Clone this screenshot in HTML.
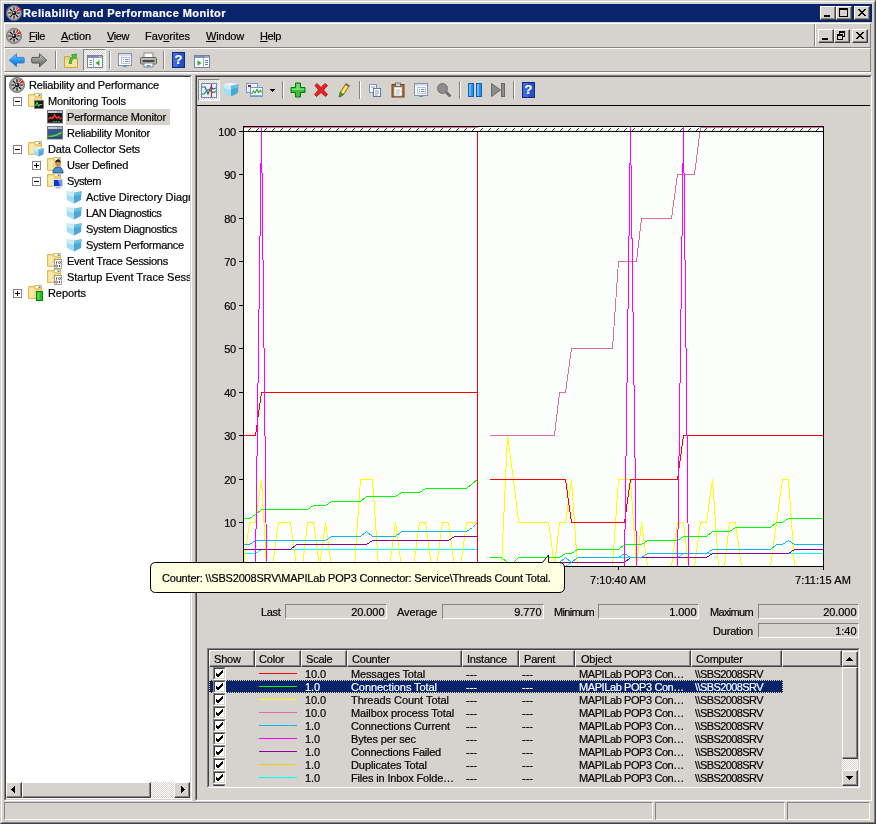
<!DOCTYPE html><html><head><meta charset="utf-8"><title>Reliability and Performance Monitor</title><style>
*{box-sizing:border-box;margin:0;padding:0}
html,body{width:876px;height:824px;overflow:hidden;background:#D6D3CE;}
body{position:relative;font-family:"Liberation Sans",sans-serif;font-size:11px;color:#000;line-height:13px;}
.a{position:absolute}
.t{position:absolute;white-space:nowrap;height:13px;line-height:13px;will-change:transform;-webkit-text-stroke:0.2px}
u{text-decoration:underline;text-underline-offset:1px;text-decoration-thickness:1px}
.btn{position:absolute;background:#D6D3CE;border:1px solid;border-color:#fff #424142 #424142 #fff;box-shadow:inset -1px -1px 0 #848284}
.hdr{position:absolute;top:0;height:17px;background:#D6D3CE;border:1px solid;border-color:#fff #424142 #424142 #fff;box-shadow:inset -1px -1px 0 #848284;}
.dith{background-color:#fff;background-image:conic-gradient(#D6D3CE 25%,#fff 0 50%,#D6D3CE 0 75%,#fff 0);background-size:2px 2px}
.stat{position:absolute;height:14px;border:1px solid;border-color:#848284 #fff #fff #848284;}
.vsep{position:absolute;width:2px;border-left:1px solid #848284;border-right:1px solid #fff}
svg{position:absolute;overflow:visible}
</style></head><body>
<div class="a" style="left:0;top:0;width:876px;height:824px;border:1px solid;border-color:#D6D3CE #424142 #424142 #D6D3CE"></div>
<div class="a" style="left:1px;top:1px;width:874px;height:822px;border:1px solid;border-color:#fff #848284 #848284 #fff"></div>
<div class="a" style="left:4px;top:4px;width:868px;height:18px;background:#08246B"></div>
<svg width="16" height="16" viewBox="0 0 16 16" style="left:6px;top:5px"><circle cx="8" cy="8" r="7.6" fill="#9a9a9a" stroke="#6e6e6e" stroke-width=".8"/><circle cx="8" cy="8" r="6" fill="#c2c2c2"/><path d="M8.800 7.200 L11.300 1.700 L15 5.200 Z" fill="#f01818"/><path d="M8 2.200v3M8 10.800v3M2.200 8h3M10.800 8h3M3.900 3.900l2.100 2.100M10 10l2.100 2.100M3.900 12.100l2.100-2.100" stroke="#101010" stroke-width="1.200"/><path d="M8 8L12.800 3.200" stroke="#fff" stroke-width="1"/><circle cx="8" cy="8" r="2.300" fill="#101010"/><circle cx="7.500" cy="7.400" r=".9" fill="#fff"/></svg>
<div class="t" style="left:23px;top:7px;letter-spacing:0.419px;font-weight:bold;color:#fff;">Reliability and Performance Monitor</div>
<div class="btn" style="left:820px;top:6px;width:16px;height:14px"></div>
<div class="a" style="left:824px;top:15px;width:6px;height:2px;background:#000"></div>
<div class="btn" style="left:836px;top:6px;width:16px;height:14px"></div>
<div class="a" style="left:839px;top:8px;width:9px;height:9px;border:1px solid #000;border-top-width:2px"></div>
<div class="btn" style="left:854px;top:6px;width:16px;height:14px"></div>
<svg width="8" height="7" style="left:858px;top:9px" shape-rendering="crispEdges"><path d="M0 0h2v1h1v1h2v-1h1v-1h2v1h-1v1h-1v1h-1v1h1v1h1v1h1v1h-2v-1h-1v-1h-2v1h-1v1h-2v-1h1v-1h1v-1h1v-1h-1v-1h-1v-1h-1z" fill="#000"/></svg>
<div class="a" style="left:4px;top:23px;width:867px;height:25px;border:1px solid;border-color:#fff #848284 #848284 #fff"></div>
<div class="a" style="left:4px;top:48px;width:867px;height:24px;border:1px solid;border-color:#fff #848284 #848284 #fff"></div>
<svg width="16" height="16" viewBox="0 0 16 16" style="left:6px;top:28px"><circle cx="8" cy="8" r="7.6" fill="#9a9a9a" stroke="#6e6e6e" stroke-width=".8"/><circle cx="8" cy="8" r="6" fill="#c2c2c2"/><path d="M8.800 7.200 L11.300 1.700 L15 5.200 Z" fill="#f01818"/><path d="M8 2.200v3M8 10.800v3M2.200 8h3M10.800 8h3M3.900 3.900l2.100 2.100M10 10l2.100 2.100M3.900 12.100l2.100-2.100" stroke="#101010" stroke-width="1.200"/><path d="M8 8L12.800 3.200" stroke="#fff" stroke-width="1"/><circle cx="8" cy="8" r="2.300" fill="#101010"/><circle cx="7.500" cy="7.400" r=".9" fill="#fff"/></svg>
<div class="t" style="left:29px;top:30px;letter-spacing:-0.430px;"><u>F</u>ile</div>
<div class="t" style="left:61px;top:30px;letter-spacing:-0.099px;"><u>A</u>ction</div>
<div class="t" style="left:107px;top:30px;letter-spacing:-0.410px;"><u>V</u>iew</div>
<div class="t" style="left:145px;top:30px;letter-spacing:-0.028px;">Fav<u>o</u>rites</div>
<div class="t" style="left:206px;top:30px;letter-spacing:-0.188px;"><u>W</u>indow</div>
<div class="t" style="left:260px;top:30px;letter-spacing:-0.406px;"><u>H</u>elp</div>
<div class="vsep" style="left:814px;top:24px;height:23px"></div>
<div class="btn" style="left:818px;top:29px;width:16px;height:14px"></div>
<div class="a" style="left:822px;top:38px;width:6px;height:2px;background:#000"></div>
<div class="btn" style="left:834px;top:29px;width:16px;height:14px"></div>
<div class="a" style="left:839px;top:31px;width:6px;height:6px;border:1px solid #000;border-top-width:2px"></div>
<div class="a" style="left:837px;top:34px;width:6px;height:6px;border:1px solid #000;border-top-width:2px;background:#D6D3CE"></div>
<div class="btn" style="left:852px;top:29px;width:16px;height:14px"></div>
<svg width="8" height="7" style="left:856px;top:32px" shape-rendering="crispEdges"><path d="M0 0h2v1h1v1h2v-1h1v-1h2v1h-1v1h-1v1h-1v1h1v1h1v1h1v1h-2v-1h-1v-1h-2v1h-1v1h-2v-1h1v-1h1v-1h1v-1h-1v-1h-1v-1h-1z" fill="#000"/></svg>
<div class="a" style="left:4px;top:72px;width:867px;height:1px;background:#fff"></div><div class="a" style="left:4px;top:73px;width:867px;height:1px;background:#ECEAE6"></div>
<svg width="17" height="16" viewBox="0 0 17 16" style="left:8px;top:52px"><defs><linearGradient id="gb" x1="0" y1="0" x2="0" y2="1"><stop offset="0" stop-color="#78c8ff"/><stop offset=".5" stop-color="#2c98f0"/><stop offset="1" stop-color="#1068c8"/></linearGradient><linearGradient id="gg" x1="0" y1="0" x2="0" y2="1"><stop offset="0" stop-color="#c8c8c8"/><stop offset=".5" stop-color="#909090"/><stop offset="1" stop-color="#686868"/></linearGradient></defs><path d="M8.500 1.800 L1.300 8.200 L8.500 14.700 V11 H15 Q16.300 11 16.300 9.800 V6.600 Q16.300 5.400 15 5.400 H8.500 Z" fill="url(#gb)" stroke="#2078d0" stroke-width=".8"/></svg>
<svg width="17" height="16" viewBox="0 0 17 16" style="left:31px;top:52px"><path d="M8.500 1.800 L15.700 8.200 L8.500 14.700 V11 H2 Q.700 11 .700 9.800 V6.600 Q.700 5.400 2 5.400 H8.500 Z" fill="url(#gg)" stroke="#484848" stroke-width=".9"/></svg>
<div class="vsep" style="left:55px;top:51px;height:18px"></div>
<svg width="16" height="16" viewBox="0 0 16 16" style="left:63px;top:52px"><path d="M1.500 4.500h5l1 1.500h7v9.500h-13z" fill="#f0d070" stroke="#c8a040" stroke-width=".9"/><path d="M2 7.500h12v7.500h-12z" fill="#f8e498"/><path d="M6.200 11.500 C6.200 7.500 7.500 5.500 9.800 4.800 L8.600 2.800 L13.600 2 L12.800 7 L11.300 5.600 C9.500 6.500 8.600 8.500 8.400 11.500z" fill="#48c848" stroke="#208820" stroke-width=".7"/></svg>
<div class="a dith" style="left:83px;top:49px;width:23px;height:22px;border:1px solid;border-color:#848284 #fff #fff #848284"></div>
<svg width="16" height="16" viewBox="0 0 16 16" style="left:87px;top:53px"><rect x=".5" y="2.500" width="15" height="12" fill="#fff" stroke="#7880a0"/><rect x="1" y="3" width="14" height="2" fill="#8090b0"/><path d="M6.500 5v9.500" stroke="#a0a8c0"/><path d="M2.500 7.500h2.500M2.500 9.500h2.500M2.500 11.500h2.500" stroke="#5080d0" stroke-width="1"/><path d="M12.500 7v6l-4-3z" fill="#38b038"/><path d="M11.500 4h1M13.500 4h1" stroke="#fff"/></svg>
<div class="vsep" style="left:109px;top:51px;height:18px"></div>
<svg width="16" height="16" viewBox="0 0 16 16" style="left:117px;top:52px"><rect x="1.500" y="1.500" width="13" height="12" fill="#fcfcfe" stroke="#8890a8"/><rect x="2" y="2" width="12" height="1.800" fill="#d0d8e8"/><rect x="4.500" y="5.500" width="8" height="6" fill="#fff" stroke="#a8b4cc" stroke-width=".8"/><path d="M6 7.500h1M8 7.500h3.500M6 9.500h1M8 9.500h3.500" stroke="#5088d0" stroke-width=".9"/><rect x="6" y="13.500" width="4" height="1.500" fill="#30a8e8"/></svg>
<svg width="17" height="16" viewBox="0 0 17 16" style="left:140px;top:52px"><rect x="4" y="1" width="9" height="5" fill="#fff" stroke="#888"/><rect x=".5" y="5.5" width="16" height="6.5" rx="1" fill="#b8b8b8" stroke="#606060"/><rect x="2.5" y="8" width="12" height="2" fill="#484848"/><rect x="4" y="11" width="9" height="4" fill="#fff" stroke="#888"/><rect x="6.5" y="13" width="4" height="1.6" fill="#30a0e0"/><circle cx="14.3" cy="7" r=".7" fill="#40e040"/></svg>
<div class="vsep" style="left:163px;top:51px;height:18px"></div>
<svg width="13" height="16" viewBox="0 0 13 16" style="left:172px;top:52px"><rect x=".5" y=".5" width="12" height="15" fill="#2850c8" stroke="#102880"/><rect x="1" y="1" width="5" height="14" fill="#4878e0" opacity=".7"/></svg>
<div class="t" style="left:172px;top:53px;width:13px;text-align:center;color:#fff;font-weight:bold;font-size:13px;line-height:14px;height:14px">?</div>
<svg width="16" height="16" viewBox="0 0 16 16" style="left:194px;top:53px"><rect x=".5" y="2.500" width="15" height="12" fill="#fff" stroke="#7880a0"/><rect x="1" y="3" width="14" height="2" fill="#8090b0"/><path d="M9.500 5v9.500" stroke="#a0a8c0"/><path d="M11 7.500h3M11 9.500h3M11 11.500h3" stroke="#5080d0" stroke-width="1"/><path d="M3.500 7v6l4-3z" fill="#38b038"/><path d="M11.500 4h1M13.500 4h1" stroke="#fff"/></svg>
<div class="a" style="left:4px;top:75px;width:188px;height:726px;background:#fff;border:1px solid;border-color:#848284 #fff #fff #848284"></div>
<div class="a" style="left:5px;top:76px;width:186px;height:724px;border:1px solid;border-color:#424142 #D6D3CE #D6D3CE #424142"></div>
<div class="a" style="left:6px;top:77px;width:184px;height:705px;overflow:hidden">
<svg width="16" height="16" viewBox="0 0 16 16" style="left:3px;top:0px"><circle cx="8" cy="8" r="7.6" fill="#9a9a9a" stroke="#6e6e6e" stroke-width=".8"/><circle cx="8" cy="8" r="6" fill="#c2c2c2"/><path d="M8.800 7.200 L11.300 1.700 L15 5.200 Z" fill="#f01818"/><path d="M8 2.200v3M8 10.800v3M2.200 8h3M10.800 8h3M3.900 3.900l2.100 2.100M10 10l2.100 2.100M3.900 12.100l2.100-2.100" stroke="#101010" stroke-width="1.200"/><path d="M8 8L12.800 3.200" stroke="#fff" stroke-width="1"/><circle cx="8" cy="8" r="2.300" fill="#101010"/><circle cx="7.500" cy="7.400" r=".9" fill="#fff"/></svg>
<div class="t" style="left:23.2px;top:2px;letter-spacing:-0.169px;">Reliability and Performance</div>
<div class="a" style="left:7px;top:20px;width:9px;height:9px;border:1px solid #848284;background:#fff"></div>
<div class="a" style="left:9px;top:24px;width:5px;height:1px;background:#000"></div>
<svg width="16" height="16" viewBox="0 0 16 16" style="left:22px;top:16px"><path d="M6.500 0.500h7v4h-7z" fill="#f8e8a8" stroke="#dcb650" stroke-width=".9"/><rect x="8" y="1.500" width="4.500" height="1.500" fill="#fff"/><rect x="10.500" y="1.500" width="2" height="1.500" fill="#3890e8"/><path d="M0.500 1.500h6l1.500 2.500h5.500v9.500h-13z" fill="#f4da88" stroke="#dcb650" stroke-width=".9"/><path d="M1.500 3h4.500v9.500h-4.500z" fill="#faecb4" opacity=".8"/><rect x="6.500" y="7.500" width="9" height="8" fill="#201418" stroke="#7a8088"/><path d="M7.500 13l1.500-3.500 1.500 3.500 1.500-1.500h2" stroke="#40e040" stroke-width="1.200" fill="none"/></svg>
<div class="t" style="left:42px;top:18px;letter-spacing:-0.120px;">Monitoring Tools</div>
<div class="a" style="left:60px;top:32px;width:104px;height:16px;background:#D6D3CE"></div>
<svg width="16" height="16" viewBox="0 0 16 16" style="left:41px;top:32px"><rect x=".5" y="1.5" width="15" height="12.5" fill="#181818" stroke="#707070"/><rect x="1" y="2" width="14" height="2" fill="#ccd0d8"/><path d="M10 3h1M12 3h1M14 3h.5" stroke="#4060c0"/><path d="M1.5 10 l2-1.5 2 1 2-3.5 2 3 2-1 2 1.5 1-.5" stroke="#f03030" stroke-width="1.6" fill="none"/><path d="M6 12.500h1.500M8.500 12.500h1.500M11 12.500h1.500" stroke="#50a070" stroke-width="1"/></svg>
<div class="t" style="left:61px;top:34px;letter-spacing:-0.197px;">Performance Monitor</div>
<svg width="16" height="16" viewBox="0 0 16 16" style="left:41px;top:48px"><rect x=".5" y="1.5" width="15" height="12.5" fill="#385888" stroke="#707880"/><rect x="1" y="2" width="14" height="2" fill="#c4ccdc"/><path d="M10 3h1M12 3h1M14 3h.5" stroke="#4060c0"/><path d="M1.5 11.5 c4 0 8-1 13-4" stroke="#50e040" stroke-width="1.6" fill="none"/><path d="M1.5 12.8h13" stroke="#203860" stroke-width="1"/></svg>
<div class="t" style="left:61px;top:50px;letter-spacing:-0.201px;">Reliability Monitor</div>
<div class="a" style="left:7px;top:68px;width:9px;height:9px;border:1px solid #848284;background:#fff"></div>
<div class="a" style="left:9px;top:72px;width:5px;height:1px;background:#000"></div>
<svg width="16" height="16" viewBox="0 0 16 16" style="left:22px;top:64px"><path d="M6.500 0.500h7v4h-7z" fill="#f8e8a8" stroke="#dcb650" stroke-width=".9"/><rect x="8" y="1.500" width="4.500" height="1.500" fill="#fff"/><rect x="10.500" y="1.500" width="2" height="1.500" fill="#3890e8"/><path d="M0.500 1.500h6l1.500 2.500h5.500v9.500h-13z" fill="#f4da88" stroke="#dcb650" stroke-width=".9"/><path d="M1.500 3h4.500v9.500h-4.500z" fill="#faecb4" opacity=".8"/><g transform="translate(5,5.500) scale(.7)"><path d="M0.500 2 L8 3.500 L8 14.500 L1 11z" fill="#a4dcf2"/><path d="M0.500 2 L8 3.500 L8 8 L.8 6z" fill="#ccecfa"/><path d="M8 3.500 L15.500 2 L15 11 L8 14.500z" fill="#4aa8d4"/><path d="M8 3.500 L15.500 2 L15.300 5.500 L8 7z" fill="#6cc0e4"/><path d="M0.500 2 L8 1 L15.500 2 L8 3.500z" fill="#f0fbff"/></g></svg>
<div class="t" style="left:42px;top:66px;letter-spacing:-0.148px;">Data Collector Sets</div>
<div class="a" style="left:26px;top:84px;width:9px;height:9px;border:1px solid #848284;background:#fff"></div>
<div class="a" style="left:28px;top:88px;width:5px;height:1px;background:#000"></div>
<div class="a" style="left:30px;top:86px;width:1px;height:5px;background:#000"></div>
<svg width="16" height="16" viewBox="0 0 16 16" style="left:41px;top:80px"><path d="M6.500 0.500h7v4h-7z" fill="#f8e8a8" stroke="#dcb650" stroke-width=".9"/><rect x="8" y="1.500" width="4.500" height="1.500" fill="#fff"/><rect x="10.500" y="1.500" width="2" height="1.500" fill="#3890e8"/><path d="M0.500 1.500h6l1.500 2.500h5.500v9.500h-13z" fill="#f4da88" stroke="#dcb650" stroke-width=".9"/><path d="M1.500 3h4.500v9.500h-4.500z" fill="#faecb4" opacity=".8"/><path d="M6 16c0-4 2-6 5-6s5 2 5 6z" fill="#4c8cdc" stroke="#183870" stroke-width=".8"/><circle cx="11" cy="6.500" r="2.700" fill="#c89464"/><path d="M8.300 6c0-2.500 1.200-3.500 2.700-3.500s2.700 1 2.700 3.500c-1-1.500-4.400-1.500-5.400 0z" fill="#38241c"/></svg>
<div class="t" style="left:61px;top:82px;letter-spacing:-0.268px;">User Defined</div>
<div class="a" style="left:26px;top:100px;width:9px;height:9px;border:1px solid #848284;background:#fff"></div>
<div class="a" style="left:28px;top:104px;width:5px;height:1px;background:#000"></div>
<svg width="16" height="16" viewBox="0 0 16 16" style="left:41px;top:96px"><path d="M6.500 0.500h7v4h-7z" fill="#f8e8a8" stroke="#dcb650" stroke-width=".9"/><rect x="8" y="1.500" width="4.500" height="1.500" fill="#fff"/><rect x="10.500" y="1.500" width="2" height="1.500" fill="#3890e8"/><path d="M0.500 1.500h6l1.500 2.500h5.500v9.500h-13z" fill="#f4da88" stroke="#dcb650" stroke-width=".9"/><path d="M1.500 3h4.500v9.500h-4.500z" fill="#faecb4" opacity=".8"/><rect x="6.500" y="6.500" width="9" height="7" fill="#1834c4" stroke="#d0d8e8" stroke-width="1"/><path d="M11 7h4v6h-2z" fill="#6c98ec"/><rect x="8.500" y="14" width="5" height="1.500" fill="#b0b8c8"/></svg>
<div class="t" style="left:61px;top:98px;letter-spacing:-0.448px;">System</div>
<svg width="16" height="16" viewBox="0 0 16 16" style="left:60px;top:112px"><path d="M0.500 2 L8 3.500 L8 14.500 L1 11z" fill="#a4dcf2"/><path d="M0.500 2 L8 3.500 L8 8 L.8 6z" fill="#ccecfa"/><path d="M8 3.500 L15.500 2 L15 11 L8 14.500z" fill="#4aa8d4"/><path d="M8 3.500 L15.500 2 L15.300 5.500 L8 7z" fill="#6cc0e4"/><path d="M0.500 2 L8 1 L15.500 2 L8 3.500z" fill="#f0fbff"/></svg>
<div class="t" style="left:80.2px;top:114px;letter-spacing:-0.03px;">Active Directory Diagnostics</div>
<svg width="16" height="16" viewBox="0 0 16 16" style="left:60px;top:128px"><path d="M0.500 2 L8 3.500 L8 14.500 L1 11z" fill="#a4dcf2"/><path d="M0.500 2 L8 3.500 L8 8 L.8 6z" fill="#ccecfa"/><path d="M8 3.500 L15.500 2 L15 11 L8 14.500z" fill="#4aa8d4"/><path d="M8 3.500 L15.500 2 L15.300 5.500 L8 7z" fill="#6cc0e4"/><path d="M0.500 2 L8 1 L15.500 2 L8 3.500z" fill="#f0fbff"/></svg>
<div class="t" style="left:80.2px;top:130px;letter-spacing:-0.390px;">LAN Diagnostics</div>
<svg width="16" height="16" viewBox="0 0 16 16" style="left:60px;top:144px"><path d="M0.500 2 L8 3.500 L8 14.500 L1 11z" fill="#a4dcf2"/><path d="M0.500 2 L8 3.500 L8 8 L.8 6z" fill="#ccecfa"/><path d="M8 3.500 L15.500 2 L15 11 L8 14.500z" fill="#4aa8d4"/><path d="M8 3.500 L15.500 2 L15.300 5.500 L8 7z" fill="#6cc0e4"/><path d="M0.500 2 L8 1 L15.500 2 L8 3.500z" fill="#f0fbff"/></svg>
<div class="t" style="left:80.2px;top:146px;letter-spacing:-0.312px;">System Diagnostics</div>
<svg width="16" height="16" viewBox="0 0 16 16" style="left:60px;top:160px"><path d="M0.500 2 L8 3.500 L8 14.500 L1 11z" fill="#a4dcf2"/><path d="M0.500 2 L8 3.500 L8 8 L.8 6z" fill="#ccecfa"/><path d="M8 3.500 L15.500 2 L15 11 L8 14.500z" fill="#4aa8d4"/><path d="M8 3.500 L15.500 2 L15.300 5.500 L8 7z" fill="#6cc0e4"/><path d="M0.500 2 L8 1 L15.500 2 L8 3.500z" fill="#f0fbff"/></svg>
<div class="t" style="left:80.2px;top:162px;letter-spacing:-0.264px;">System Performance</div>
<svg width="16" height="16" viewBox="0 0 16 16" style="left:41px;top:176px"><path d="M6.500 0.500h7v4h-7z" fill="#f8e8a8" stroke="#dcb650" stroke-width=".9"/><rect x="8" y="1.500" width="4.500" height="1.500" fill="#fff"/><rect x="10.500" y="1.500" width="2" height="1.500" fill="#3890e8"/><path d="M0.500 1.500h6l1.500 2.500h5.500v9.500h-13z" fill="#f4da88" stroke="#dcb650" stroke-width=".9"/><path d="M1.500 3h4.500v9.500h-4.500z" fill="#faecb4" opacity=".8"/><rect x="7.5" y="6.5" width="7" height="9" fill="#f8f8f8" stroke="#909090" stroke-width=".8"/><path d="M9.5 8.5v2M12.5 12v2" stroke="#404040" stroke-width="1"/><circle cx="12.5" cy="9.5" r="1" fill="none" stroke="#404040" stroke-width=".8"/><circle cx="9.5" cy="13" r="1" fill="none" stroke="#404040" stroke-width=".8"/></svg>
<div class="t" style="left:61px;top:178px;letter-spacing:-0.273px;">Event Trace Sessions</div>
<svg width="16" height="16" viewBox="0 0 16 16" style="left:41px;top:192px"><path d="M6.500 0.500h7v4h-7z" fill="#f8e8a8" stroke="#dcb650" stroke-width=".9"/><rect x="8" y="1.500" width="4.500" height="1.500" fill="#fff"/><rect x="10.500" y="1.500" width="2" height="1.500" fill="#3890e8"/><path d="M0.500 1.500h6l1.500 2.500h5.500v9.500h-13z" fill="#f4da88" stroke="#dcb650" stroke-width=".9"/><path d="M1.500 3h4.500v9.500h-4.500z" fill="#faecb4" opacity=".8"/><rect x="7.5" y="6.5" width="7" height="9" fill="#f8f8f8" stroke="#909090" stroke-width=".8"/><path d="M9.5 8.5v2M12.5 12v2" stroke="#404040" stroke-width="1"/><circle cx="12.5" cy="9.5" r="1" fill="none" stroke="#404040" stroke-width=".8"/><circle cx="9.5" cy="13" r="1" fill="none" stroke="#404040" stroke-width=".8"/></svg>
<div class="t" style="left:61px;top:194px;letter-spacing:-0.01px;">Startup Event Trace Sessions</div>
<div class="a" style="left:7px;top:212px;width:9px;height:9px;border:1px solid #848284;background:#fff"></div>
<div class="a" style="left:9px;top:216px;width:5px;height:1px;background:#000"></div>
<div class="a" style="left:11px;top:214px;width:1px;height:5px;background:#000"></div>
<svg width="16" height="16" viewBox="0 0 16 16" style="left:22px;top:208px"><path d="M6.500 0.500h7v4h-7z" fill="#f8e8a8" stroke="#dcb650" stroke-width=".9"/><rect x="8" y="1.500" width="4.500" height="1.500" fill="#fff"/><rect x="10.500" y="1.500" width="2" height="1.500" fill="#3890e8"/><path d="M0.500 1.500h6l1.500 2.500h5.500v9.500h-13z" fill="#f4da88" stroke="#dcb650" stroke-width=".9"/><path d="M1.500 3h4.500v9.500h-4.500z" fill="#faecb4" opacity=".8"/><rect x="8.500" y="6.500" width="6" height="9" fill="#20c020" stroke="#108010"/><rect x="9.500" y="7.500" width="2" height="7" fill="#70f070" opacity=".7"/></svg>
<div class="t" style="left:42px;top:210px;letter-spacing:-0.076px;">Reports</div>
</div>
<div class="a dith" style="left:6px;top:782px;width:184px;height:16px"></div>
<div class="btn" style="left:6px;top:782px;width:16px;height:16px"></div>
<div class="btn" style="left:174px;top:782px;width:16px;height:16px"></div>
<div class="btn" style="left:22px;top:782px;width:129px;height:16px"></div>
<svg width="4" height="7" style="left:11px;top:786px" shape-rendering="crispEdges"><path d="M4 0v7L0 3.500z" fill="#000"/></svg>
<svg width="4" height="7" style="left:181px;top:786px" shape-rendering="crispEdges"><path d="M0 0v7L4 3.500z" fill="#000"/></svg>
<div class="a" style="left:195px;top:75px;width:677px;height:726px;border:1px solid;border-color:#848284 #fff #fff #848284"></div>
<div class="a" style="left:196px;top:76px;width:675px;height:724px;border:1px solid;border-color:#424142 #D6D3CE #D6D3CE #424142"></div>
<div class="a" style="left:197px;top:105px;width:673px;height:1px;background:#000"></div>
<div class="a dith" style="left:198px;top:79px;width:22px;height:22px;border:1px solid;border-color:#848284 #fff #fff #848284"></div>
<svg width="16" height="16" viewBox="0 0 16 16" style="left:201px;top:83px"><rect x=".5" y=".5" width="15" height="14" fill="#e8f0fc" stroke="#6888c8"/><path d="M1 4l3 0 3 7 3-7 2 2 3-1" stroke="#2858c8" stroke-width="1.2" fill="none"/><path d="M1 11c2 1 3-1 4.500-3s3-2 4.500 0 3 2 5 0" stroke="#30a030" stroke-width="1.300" fill="none"/><path d="M10.500 1v13" stroke="#e02020" stroke-width="1.200"/></svg>
<svg width="16" height="16" viewBox="0 0 16 16" style="left:223px;top:82px"><path d="M0.500 2 L8 3.500 L8 14.500 L1 11z" fill="#a4dcf2"/><path d="M0.500 2 L8 3.500 L8 8 L.8 6z" fill="#ccecfa"/><path d="M8 3.500 L15.500 2 L15 11 L8 14.500z" fill="#4aa8d4"/><path d="M8 3.500 L15.500 2 L15.300 5.500 L8 7z" fill="#6cc0e4"/><path d="M0.500 2 L8 1 L15.500 2 L8 3.500z" fill="#f0fbff"/></svg>
<svg width="17" height="16" viewBox="0 0 17 16" style="left:246px;top:82px"><rect x=".5" y="1.500" width="11" height="9" fill="#e8f0fc" stroke="#7898d0"/><rect x="2" y="3" width="3" height="2" fill="#b01030"/><rect x="4.500" y="5.500" width="12" height="9" fill="#f4f8ff" stroke="#7898d0"/><path d="M5.500 12l2-3 1.500 2 2-3.500 1.500 3 2-2 1 2" stroke="#30a030" stroke-width="1.100" fill="none"/><path d="M5.500 13.500h10" stroke="#90a8d0"/></svg>
<svg width="5" height="3" style="left:270px;top:89px" shape-rendering="crispEdges"><path d="M0 0h5L2.500 3z" fill="#000"/></svg>
<div class="vsep" style="left:282px;top:81px;height:18px"></div>
<svg width="16" height="16" viewBox="0 0 16 16" style="left:290px;top:82px"><path d="M5.500 1h5v4.500H15v5h-4.500V15h-5v-4.500H1v-5h4.500z" fill="#38c038" stroke="#107010" stroke-width="1"/><path d="M6.500 2h3v4.500H14v1.500H2V6.500h4.500z" fill="#90f090" opacity=".7"/></svg>
<svg width="16" height="16" viewBox="0 0 16 16" style="left:313px;top:82px"><path d="M2 3.500 L4 1.500 L8 5.500 L12 1.500 L14.500 3.500 L10.500 8 L14.500 12.500 L12.500 14.500 L8 10.500 L3.500 14.500 L1.500 12.500 L5.500 8z" fill="#e82020" stroke="#a01010" stroke-width=".8"/></svg>
<svg width="16" height="16" viewBox="0 0 16 16" style="left:336px;top:82px"><path d="M10 1.500l3.500 2-6 9-3.500-2z" fill="#e8c020" stroke="#806010" stroke-width=".8"/><path d="M11 2l1.500 1-5.500 8.500-1.500-1z" fill="#fff080"/><path d="M4 10.500l3.500 2-1.500 1.500-3 1z" fill="#40a040" stroke="#206020" stroke-width=".6"/><path d="M10 1.500l3.500 2-1 1.500-3.500-2z" fill="#707070"/></svg>
<div class="vsep" style="left:359px;top:81px;height:18px"></div>
<svg width="16" height="16" viewBox="0 0 16 16" style="left:367px;top:82px"><rect x="2.500" y="2.500" width="7" height="8" fill="#fff" stroke="#8090b0"/><rect x="6.500" y="6.500" width="7" height="8" fill="#fff" stroke="#6078a8"/><path d="M8 9h4M8 11h4M8 13h3" stroke="#7090d0" stroke-width=".9"/><path d="M4 5h4" stroke="#7090d0" stroke-width=".9"/></svg>
<svg width="16" height="16" viewBox="0 0 16 16" style="left:390px;top:82px"><rect x="2" y="2.500" width="12" height="12.500" fill="#b07030" stroke="#704010"/><rect x="4" y="5" width="8" height="9" fill="#fff" stroke="#909090" stroke-width=".6"/><rect x="5.500" y="1" width="5" height="3.500" fill="#d0d0d0" stroke="#606060" stroke-width=".8"/><path d="M5.500 8h5M5.500 10h5M5.500 12h4" stroke="#a0a0a0" stroke-width=".8"/></svg>
<svg width="16" height="16" viewBox="0 0 16 16" style="left:413px;top:82px"><rect x="1.500" y="1.500" width="13" height="12" fill="#fcfcfe" stroke="#8890a8"/><rect x="2" y="2" width="12" height="1.800" fill="#d0d8e8"/><rect x="4.500" y="5.500" width="8" height="6" fill="#fff" stroke="#a8b4cc" stroke-width=".8"/><path d="M6 7.500h1M8 7.500h3.500M6 9.500h1M8 9.500h3.500" stroke="#5088d0" stroke-width=".9"/><rect x="6" y="13.500" width="4" height="1.500" fill="#30a8e8"/></svg>
<svg width="16" height="16" viewBox="0 0 16 16" style="left:436px;top:82px"><circle cx="6.500" cy="6.500" r="5" fill="#8c8c8c" stroke="#707070"/><path d="M10 10l4.500 4.500" stroke="#707070" stroke-width="3"/></svg>
<div class="vsep" style="left:459px;top:81px;height:18px"></div>
<svg width="16" height="16" viewBox="0 0 16 16" style="left:467px;top:82px"><rect x="1.500" y="1.500" width="5" height="13" fill="#2890e8" stroke="#1060b0"/><rect x="9.500" y="1.500" width="5" height="13" fill="#2890e8" stroke="#1060b0"/><path d="M3 2v12M11 2v12" stroke="#80c8ff" stroke-width="1.500"/></svg>
<svg width="16" height="16" viewBox="0 0 16 16" style="left:490px;top:82px"><path d="M1.500 1.500L10.500 8 1.500 14.500z" fill="#8c8c8c" stroke="#686868"/><rect x="11.500" y="1.500" width="3" height="13" fill="#8c8c8c" stroke="#686868"/></svg>
<div class="vsep" style="left:513px;top:81px;height:18px"></div>
<svg width="13" height="16" viewBox="0 0 13 16" style="left:522px;top:82px"><rect x=".5" y=".5" width="12" height="15" fill="#2850c8" stroke="#102880"/><rect x="1" y="1" width="5" height="14" fill="#4878e0" opacity=".7"/></svg>
<div class="t" style="left:522px;top:83px;width:13px;text-align:center;color:#fff;font-weight:bold;font-size:13px;line-height:14px;height:14px">?</div>
<div class="a" style="left:243px;top:127px;width:581px;height:440px;background:#FCFEFB"></div>
<svg width="876" height="824" viewBox="0 0 876 824" style="left:0;top:0" shape-rendering="crispEdges" fill="none" stroke-width="1"><defs><pattern id="hatch" width="8" height="3" patternUnits="userSpaceOnUse" x="240" y="128"><rect x="0" y="2" width="1" height="1" fill="#383838"/><rect x="1" y="1" width="1" height="1" fill="#383838"/><rect x="2" y="0" width="1" height="1" fill="#383838"/></pattern><clipPath id="plot"><rect x="243" y="127" width="581" height="440"/></clipPath></defs><rect x="244" y="128" width="580" height="3" fill="url(#hatch)" stroke="none"/><g clip-path="url(#plot)"><polyline points="243.5,553.5 249.5,553.5 255.5,553.5 261.5,549.5 266.5,549.5 272.5,549.5 278.5,549.5 284.5,549.5 290.5,549.5 296.5,549.5 302.5,549.5 307.5,549.5 313.5,549.5 319.5,549.5 325.5,549.5 331.5,549.5 337.5,549.5 343.5,549.5 348.5,549.5 354.5,549.5 360.5,549.5 366.5,549.5 372.5,549.5 378.5,549.5 384.5,549.5 389.5,549.5 395.5,549.5 401.5,549.5 407.5,549.5 413.5,549.5 419.5,549.5 425.5,549.5 431.5,549.5 436.5,549.5 442.5,549.5 448.5,549.5 454.5,549.5 460.5,549.5 466.5,549.5 472.5,549.5 477.5,549.5" stroke="#00FFFF" /><polyline points="489.5,566.5 495.5,566.5 501.5,566.5 507.5,566.5 513.5,566.5 518.5,566.5 524.5,566.5 530.5,566.5 536.5,566.5 542.5,566.5 548.5,566.5 554.5,566.5 559.5,566.5 565.5,566.5 571.5,562.5 577.5,557.5 583.5,557.5 589.5,557.5 595.5,557.5 600.5,557.5 606.5,557.5 612.5,557.5 618.5,557.5 624.5,557.5 630.5,557.5 636.5,557.5 641.5,557.5 647.5,557.5 653.5,557.5 659.5,557.5 665.5,557.5 671.5,557.5 677.5,557.5 683.5,553.5 688.5,553.5 694.5,553.5 700.5,553.5 706.5,553.5 712.5,553.5 718.5,553.5 724.5,553.5 729.5,553.5 735.5,553.5 741.5,553.5 747.5,553.5 753.5,553.5 759.5,553.5 765.5,553.5 770.5,553.5 776.5,553.5 782.5,553.5 788.5,553.5 794.5,553.5 800.5,553.5 806.5,553.5 811.5,553.5 817.5,553.5 823.5,553.5" stroke="#00FFFF" /><polyline points="243.5,566.5 249.5,522.5 255.5,522.5 261.5,479.5 266.5,566.5 272.5,566.5 278.5,522.5 284.5,522.5 290.5,522.5 296.5,566.5 302.5,566.5 307.5,522.5 313.5,522.5 319.5,566.5 325.5,522.5 331.5,566.5 337.5,566.5 343.5,566.5 348.5,566.5 354.5,566.5 360.5,479.5 366.5,479.5 372.5,479.5 378.5,566.5 384.5,566.5 389.5,566.5 395.5,522.5 401.5,566.5 407.5,566.5 413.5,566.5 419.5,522.5 425.5,522.5 431.5,566.5 436.5,566.5 442.5,522.5 448.5,522.5 454.5,566.5 460.5,566.5 466.5,522.5 472.5,522.5 477.5,522.5" stroke="#FFFF00" /><polyline points="489.5,566.5 495.5,566.5 501.5,566.5 507.5,435.5 513.5,479.5 518.5,522.5 524.5,522.5 530.5,522.5 536.5,522.5 542.5,522.5 548.5,522.5 554.5,566.5 559.5,522.5 565.5,522.5 571.5,479.5 577.5,566.5 583.5,566.5 589.5,566.5 595.5,566.5 600.5,566.5 606.5,566.5 612.5,566.5 618.5,479.5 624.5,479.5 630.5,479.5 636.5,566.5 641.5,522.5 647.5,566.5 653.5,566.5 659.5,566.5 665.5,566.5 671.5,566.5 677.5,522.5 683.5,522.5 688.5,566.5 694.5,566.5 700.5,522.5 706.5,522.5 712.5,479.5 718.5,566.5 724.5,566.5 729.5,522.5 735.5,522.5 741.5,566.5 747.5,566.5 753.5,566.5 759.5,566.5 765.5,566.5 770.5,566.5 776.5,522.5 782.5,479.5 788.5,479.5 794.5,566.5 800.5,566.5 806.5,566.5 811.5,566.5 817.5,566.5 823.5,566.5" stroke="#FFFF00" /><polyline points="243.5,549.5 249.5,549.5 255.5,549.5 261.5,549.5 266.5,549.5 272.5,549.5 278.5,549.5 284.5,549.5 290.5,549.5 296.5,544.5 302.5,544.5 307.5,544.5 313.5,544.5 319.5,544.5 325.5,544.5 331.5,544.5 337.5,544.5 343.5,544.5 348.5,544.5 354.5,544.5 360.5,544.5 366.5,544.5 372.5,540.5 378.5,540.5 384.5,540.5 389.5,540.5 395.5,540.5 401.5,540.5 407.5,540.5 413.5,540.5 419.5,540.5 425.5,540.5 431.5,540.5 436.5,540.5 442.5,540.5 448.5,540.5 454.5,536.5 460.5,536.5 466.5,536.5 472.5,536.5 477.5,536.5" stroke="#8C0094" /><polyline points="489.5,562.5 495.5,562.5 501.5,562.5 507.5,562.5 513.5,562.5 518.5,562.5 524.5,562.5 530.5,562.5 536.5,562.5 542.5,562.5 548.5,562.5 554.5,562.5 559.5,562.5 565.5,562.5 571.5,562.5 577.5,562.5 583.5,562.5 589.5,562.5 595.5,562.5 600.5,562.5 606.5,562.5 612.5,562.5 618.5,562.5 624.5,562.5 630.5,557.5 636.5,557.5 641.5,557.5 647.5,557.5 653.5,557.5 659.5,557.5 665.5,557.5 671.5,557.5 677.5,557.5 683.5,557.5 688.5,557.5 694.5,557.5 700.5,557.5 706.5,557.5 712.5,553.5 718.5,553.5 724.5,553.5 729.5,553.5 735.5,553.5 741.5,553.5 747.5,553.5 753.5,553.5 759.5,553.5 765.5,553.5 770.5,553.5 776.5,553.5 782.5,553.5 788.5,553.5 794.5,549.5 800.5,549.5 806.5,549.5 811.5,549.5 817.5,549.5 823.5,549.5" stroke="#8C0094" /><polyline points="243.5,544.5 249.5,544.5 255.5,540.5 261.5,540.5 266.5,540.5 272.5,540.5 278.5,540.5 284.5,540.5 290.5,540.5 296.5,540.5 302.5,540.5 307.5,540.5 313.5,540.5 319.5,540.5 325.5,540.5 331.5,536.5 337.5,536.5 343.5,536.5 348.5,536.5 354.5,536.5 360.5,536.5 366.5,531.5 372.5,536.5 378.5,536.5 384.5,536.5 389.5,536.5 395.5,536.5 401.5,531.5 407.5,531.5 413.5,531.5 419.5,531.5 425.5,531.5 431.5,531.5 436.5,531.5 442.5,531.5 448.5,531.5 454.5,531.5 460.5,531.5 466.5,531.5 472.5,527.5 477.5,522.5" stroke="#10B4F8" /><polyline points="489.5,562.5 495.5,562.5 501.5,562.5 507.5,562.5 513.5,562.5 518.5,562.5 524.5,562.5 530.5,562.5 536.5,562.5 542.5,562.5 548.5,562.5 554.5,562.5 559.5,562.5 565.5,557.5 571.5,562.5 577.5,557.5 583.5,557.5 589.5,557.5 595.5,557.5 600.5,557.5 606.5,557.5 612.5,557.5 618.5,557.5 624.5,553.5 630.5,557.5 636.5,557.5 641.5,557.5 647.5,553.5 653.5,553.5 659.5,553.5 665.5,553.5 671.5,553.5 677.5,553.5 683.5,553.5 688.5,553.5 694.5,553.5 700.5,553.5 706.5,553.5 712.5,549.5 718.5,549.5 724.5,549.5 729.5,549.5 735.5,549.5 741.5,549.5 747.5,549.5 753.5,549.5 759.5,549.5 765.5,549.5 770.5,549.5 776.5,544.5 782.5,544.5 788.5,540.5 794.5,544.5 800.5,544.5 806.5,544.5 811.5,544.5 817.5,544.5 823.5,544.5" stroke="#10B4F8" /><polyline points="243.5,518.5 249.5,518.5 255.5,514.5 261.5,509.5 266.5,509.5 272.5,509.5 278.5,509.5 284.5,509.5 290.5,509.5 296.5,509.5 302.5,509.5 307.5,509.5 313.5,505.5 319.5,505.5 325.5,505.5 331.5,501.5 337.5,501.5 343.5,501.5 348.5,501.5 354.5,501.5 360.5,501.5 366.5,496.5 372.5,496.5 378.5,496.5 384.5,496.5 389.5,496.5 395.5,496.5 401.5,492.5 407.5,492.5 413.5,492.5 419.5,492.5 425.5,488.5 431.5,488.5 436.5,488.5 442.5,488.5 448.5,488.5 454.5,488.5 460.5,488.5 466.5,488.5 472.5,483.5 477.5,479.5" stroke="#00FF00" /><polyline points="489.5,557.5 495.5,557.5 501.5,557.5 507.5,562.5 513.5,562.5 518.5,557.5 524.5,557.5 530.5,557.5 536.5,557.5 542.5,557.5 548.5,557.5 554.5,557.5 559.5,557.5 565.5,553.5 571.5,553.5 577.5,549.5 583.5,549.5 589.5,549.5 595.5,549.5 600.5,549.5 606.5,549.5 612.5,549.5 618.5,549.5 624.5,544.5 630.5,544.5 636.5,544.5 641.5,544.5 647.5,540.5 653.5,540.5 659.5,540.5 665.5,540.5 671.5,540.5 677.5,540.5 683.5,536.5 688.5,536.5 694.5,536.5 700.5,536.5 706.5,536.5 712.5,531.5 718.5,531.5 724.5,531.5 729.5,531.5 735.5,527.5 741.5,527.5 747.5,527.5 753.5,527.5 759.5,527.5 765.5,527.5 770.5,527.5 776.5,522.5 782.5,522.5 788.5,518.5 794.5,518.5 800.5,518.5 806.5,518.5 811.5,518.5 817.5,518.5 823.5,518.5" stroke="#00FF00" /><polyline points="243.5,127.5 477.5,127.5" stroke="#E070A8" /><polyline points="489.5,435.5 495.5,435.5 501.5,435.5 507.5,435.5 513.5,435.5 518.5,435.5 524.5,435.5 530.5,435.5 536.5,435.5 542.5,435.5 548.5,435.5 554.5,435.5 559.5,392.5 565.5,392.5 571.5,348.5 577.5,348.5 583.5,348.5 589.5,348.5 595.5,348.5 600.5,348.5 606.5,348.5 612.5,348.5 618.5,261.5 624.5,261.5 630.5,261.5 636.5,261.5 641.5,218.5 647.5,218.5 653.5,218.5 659.5,218.5 665.5,218.5 671.5,218.5 677.5,174.5 683.5,174.5 688.5,174.5 694.5,174.5" stroke="#DC6CA4" /><polyline points="694.5,174.5 700.5,127.5 823.5,127.5" stroke="#DC6CA4" /><polyline points="243.5,435.5 249.5,435.5 255.5,435.5 261.5,392.5 266.5,392.5 272.5,392.5 278.5,392.5 284.5,392.5 290.5,392.5 296.5,392.5 302.5,392.5 307.5,392.5 313.5,392.5 319.5,392.5 325.5,392.5 331.5,392.5 337.5,392.5 343.5,392.5 348.5,392.5 354.5,392.5 360.5,392.5 366.5,392.5 372.5,392.5 378.5,392.5 384.5,392.5 389.5,392.5 395.5,392.5 401.5,392.5 407.5,392.5 413.5,392.5 419.5,392.5 425.5,392.5 431.5,392.5 436.5,392.5 442.5,392.5 448.5,392.5 454.5,392.5 460.5,392.5 466.5,392.5 472.5,392.5 477.5,392.5" stroke="#FF0000" /><polyline points="489.5,479.5 495.5,479.5 501.5,479.5 507.5,479.5 513.5,479.5 518.5,479.5 524.5,479.5 530.5,479.5 536.5,479.5 542.5,479.5 548.5,479.5 554.5,479.5 559.5,479.5 565.5,479.5 571.5,522.5 577.5,522.5 583.5,522.5 589.5,522.5 595.5,522.5 600.5,522.5 606.5,522.5 612.5,522.5 618.5,522.5 624.5,522.5 630.5,479.5 636.5,479.5 641.5,479.5 647.5,479.5 653.5,479.5 659.5,479.5 665.5,479.5 671.5,479.5 677.5,479.5 683.5,435.5 688.5,435.5 694.5,435.5 700.5,435.5 706.5,435.5 712.5,435.5 718.5,435.5 724.5,435.5 729.5,435.5 735.5,435.5 741.5,435.5 747.5,435.5 753.5,435.5 759.5,435.5 765.5,435.5 770.5,435.5 776.5,435.5 782.5,435.5 788.5,435.5 794.5,435.5 800.5,435.5 806.5,435.5 811.5,435.5 817.5,435.5 823.5,435.5" stroke="#FF0000" /><polyline points="243.5,566.5 255.5,566.5" stroke="#FF00FF" /><polyline points="255.5,566.5 261.5,127.5 266.5,566.5" stroke="#FF00FF" /><polyline points="624.5,566.5 630.5,127.5 636.5,566.5" stroke="#FF00FF" /><polyline points="677.5,566.5 683.5,127.5 688.5,566.5" stroke="#FF00FF" /></g><path d="M477.500 131V566" stroke="#FF0000"/><path d="M243.500 126.500H824" stroke="#000"/><path d="M243.500 131.500H824" stroke="#000"/><path d="M243.500 126V567" stroke="#000"/><path d="M823.500 126V567" stroke="#000"/><path d="M243 566.500H824" stroke="#000"/><path d="M239 522.5H243" stroke="#000"/><path d="M239 479.5H243" stroke="#000"/><path d="M239 435.5H243" stroke="#000"/><path d="M239 392.5H243" stroke="#000"/><path d="M239 348.5H243" stroke="#000"/><path d="M239 305.5H243" stroke="#000"/><path d="M239 261.5H243" stroke="#000"/><path d="M239 218.5H243" stroke="#000"/><path d="M239 174.5H243" stroke="#000"/><path d="M239 131.5H243" stroke="#000"/><path d="M618.500 566V570M823.500 566V570" stroke="#000"/></svg>
<div class="t" style="left:200px;width:36px;text-align:right;top:517px;letter-spacing:-0.2px">10</div>
<div class="t" style="left:200px;width:36px;text-align:right;top:474px;letter-spacing:-0.2px">20</div>
<div class="t" style="left:200px;width:36px;text-align:right;top:430px;letter-spacing:-0.2px">30</div>
<div class="t" style="left:200px;width:36px;text-align:right;top:387px;letter-spacing:-0.2px">40</div>
<div class="t" style="left:200px;width:36px;text-align:right;top:343px;letter-spacing:-0.2px">50</div>
<div class="t" style="left:200px;width:36px;text-align:right;top:300px;letter-spacing:-0.2px">60</div>
<div class="t" style="left:200px;width:36px;text-align:right;top:256px;letter-spacing:-0.2px">70</div>
<div class="t" style="left:200px;width:36px;text-align:right;top:213px;letter-spacing:-0.2px">80</div>
<div class="t" style="left:200px;width:36px;text-align:right;top:169px;letter-spacing:-0.2px">90</div>
<div class="t" style="left:200px;width:36px;text-align:right;top:126px;letter-spacing:-0.2px">100</div>
<div class="t" style="left:590px;top:574px;letter-spacing:0.030px;">7:10:40 AM</div>
<div class="t" style="left:795px;top:574px;letter-spacing:0.111px;">7:11:15 AM</div>
<div class="t" style="left:260.5px;top:606px;letter-spacing:-0.328px;">Last</div>
<div class="stat" style="left:285px;top:604px;width:102px;height:15px"></div>
<div class="t" style="left:285px;top:606px;width:99.5px;text-align:right;letter-spacing:-0.05px">20.000</div>
<div class="t" style="left:397px;top:606px;letter-spacing:-0.114px;">Average</div>
<div class="stat" style="left:442px;top:604px;width:102px;height:15px"></div>
<div class="t" style="left:442px;top:606px;width:99.5px;text-align:right;letter-spacing:-0.05px">9.770</div>
<div class="t" style="left:553.5px;top:606px;letter-spacing:-0.656px;">Minimum</div>
<div class="stat" style="left:598px;top:604px;width:101px;height:15px"></div>
<div class="t" style="left:598px;top:606px;width:98.5px;text-align:right;letter-spacing:-0.05px">1.000</div>
<div class="t" style="left:709.5px;top:606px;letter-spacing:-0.665px;">Maximum</div>
<div class="stat" style="left:758px;top:604px;width:101px;height:15px"></div>
<div class="t" style="left:758px;top:606px;width:98.5px;text-align:right;letter-spacing:-0.05px">20.000</div>
<div class="t" style="left:712.5px;top:625px;letter-spacing:-0.199px;">Duration</div>
<div class="stat" style="left:758px;top:623px;width:101px;height:15px"></div>
<div class="t" style="left:758px;top:625px;width:98.5px;text-align:right;letter-spacing:-0.05px">1:40</div>
<div class="a" style="left:207px;top:648px;width:653px;height:140px;border:1px solid;border-color:#848284 #fff #fff #848284"></div>
<div class="a" style="left:208px;top:649px;width:651px;height:138px;border:1px solid;border-color:#424142 #D6D3CE #D6D3CE #424142"></div>
<div class="a" style="left:209px;top:650px;width:633px;height:136px;overflow:hidden">
<div class="hdr" style="left:0px;width:46px"></div>
<div class="t" style="left:5.3px;top:3px;letter-spacing:-0.2px">Show</div>
<div class="hdr" style="left:46px;width:46px"></div>
<div class="t" style="left:50.3px;top:3px;letter-spacing:-0.2px">Color</div>
<div class="hdr" style="left:92px;width:46px"></div>
<div class="t" style="left:97.3px;top:3px;letter-spacing:-0.2px">Scale</div>
<div class="hdr" style="left:138px;width:115px"></div>
<div class="t" style="left:143.3px;top:3px;letter-spacing:-0.2px">Counter</div>
<div class="hdr" style="left:253px;width:57px"></div>
<div class="t" style="left:258.3px;top:3px;letter-spacing:-0.2px">Instance</div>
<div class="hdr" style="left:310px;width:56px"></div>
<div class="t" style="left:315.3px;top:3px;letter-spacing:-0.2px">Parent</div>
<div class="hdr" style="left:366px;width:116px"></div>
<div class="t" style="left:372.3px;top:3px;letter-spacing:-0.2px">Object</div>
<div class="hdr" style="left:482px;width:91px"></div>
<div class="t" style="left:487.3px;top:3px;letter-spacing:-0.2px">Computer</div>
<div class="hdr" style="left:573px;width:60px"></div>
<div class="a" style="left:4px;top:17px;width:13px;height:13px;background:#fff;border:1px solid;border-color:#848284 #fff #fff #848284"></div>
<div class="a" style="left:5px;top:18px;width:11px;height:11px;border:1px solid;border-color:#424142 #D6D3CE #D6D3CE #424142"></div>
<svg width="7" height="7" style="left:7px;top:20px" shape-rendering="crispEdges"><path d="M0 2v3l2 2 5-5v-3l-5 5z" fill="#000" transform="translate(0,0.5)"/></svg>
<div class="a" style="left:50px;top:23px;width:38px;height:1px;background:#FF0000"></div>
<div class="t" style="left:96px;top:18px;color:#000;letter-spacing:-0.109px;">10.0</div>
<div class="t" style="left:141.5px;top:18px;color:#000;letter-spacing:-0.162px;">Messages Total</div>
<div class="t" style="left:257px;top:18px;color:#000;letter-spacing:0.010px;">---</div>
<div class="t" style="left:313px;top:18px;color:#000;letter-spacing:0.010px;">---</div>
<div class="t" style="left:370.29999999999995px;top:18px;color:#000;letter-spacing:-0.410px;">MAPILab POP3 Con…</div>
<div class="t" style="left:486px;top:18px;color:#000;letter-spacing:-0.590px;">\\SBS2008SRV</div>
<div class="a" style="left:0;top:30px;width:574px;height:13px;background:#08246B;outline:1px dotted #e8d890;outline-offset:-1px"></div>
<div class="a" style="left:4px;top:30px;width:13px;height:13px;background:#fff;border:1px solid;border-color:#848284 #fff #fff #848284"></div>
<div class="a" style="left:5px;top:31px;width:11px;height:11px;border:1px solid;border-color:#424142 #D6D3CE #D6D3CE #424142"></div>
<svg width="7" height="7" style="left:7px;top:33px" shape-rendering="crispEdges"><path d="M0 2v3l2 2 5-5v-3l-5 5z" fill="#000" transform="translate(0,0.5)"/></svg>
<div class="a" style="left:50px;top:36px;width:38px;height:1px;background:#00FF00"></div>
<div class="t" style="left:96px;top:31px;color:#fff;letter-spacing:-0.104px;">1.0</div>
<div class="t" style="left:141.5px;top:31px;color:#fff;letter-spacing:-0.076px;">Connections Total</div>
<div class="t" style="left:257px;top:31px;color:#fff;letter-spacing:0.010px;">---</div>
<div class="t" style="left:313px;top:31px;color:#fff;letter-spacing:0.010px;">---</div>
<div class="t" style="left:370.29999999999995px;top:31px;color:#fff;letter-spacing:-0.410px;">MAPILab POP3 Con…</div>
<div class="t" style="left:486px;top:31px;color:#fff;letter-spacing:-0.590px;">\\SBS2008SRV</div>
<div class="a" style="left:4px;top:43px;width:13px;height:13px;background:#fff;border:1px solid;border-color:#848284 #fff #fff #848284"></div>
<div class="a" style="left:5px;top:44px;width:11px;height:11px;border:1px solid;border-color:#424142 #D6D3CE #D6D3CE #424142"></div>
<svg width="7" height="7" style="left:7px;top:46px" shape-rendering="crispEdges"><path d="M0 2v3l2 2 5-5v-3l-5 5z" fill="#000" transform="translate(0,0.5)"/></svg>
<div class="a" style="left:50px;top:49px;width:38px;height:1px;background:#FFFF00"></div>
<div class="t" style="left:96px;top:44px;color:#000;letter-spacing:-0.109px;">10.0</div>
<div class="t" style="left:141.5px;top:44px;color:#000;letter-spacing:-0.049px;">Threads Count Total</div>
<div class="t" style="left:257px;top:44px;color:#000;letter-spacing:0.010px;">---</div>
<div class="t" style="left:313px;top:44px;color:#000;letter-spacing:0.010px;">---</div>
<div class="t" style="left:370.29999999999995px;top:44px;color:#000;letter-spacing:-0.410px;">MAPILab POP3 Con…</div>
<div class="t" style="left:486px;top:44px;color:#000;letter-spacing:-0.590px;">\\SBS2008SRV</div>
<div class="a" style="left:4px;top:56px;width:13px;height:13px;background:#fff;border:1px solid;border-color:#848284 #fff #fff #848284"></div>
<div class="a" style="left:5px;top:57px;width:11px;height:11px;border:1px solid;border-color:#424142 #D6D3CE #D6D3CE #424142"></div>
<svg width="7" height="7" style="left:7px;top:59px" shape-rendering="crispEdges"><path d="M0 2v3l2 2 5-5v-3l-5 5z" fill="#000" transform="translate(0,0.5)"/></svg>
<div class="a" style="left:50px;top:62px;width:38px;height:1px;background:#DC6CA4"></div>
<div class="t" style="left:96px;top:57px;color:#000;letter-spacing:-0.109px;">10.0</div>
<div class="t" style="left:141.5px;top:57px;color:#000;letter-spacing:-0.124px;">Mailbox process Total</div>
<div class="t" style="left:257px;top:57px;color:#000;letter-spacing:0.010px;">---</div>
<div class="t" style="left:313px;top:57px;color:#000;letter-spacing:0.010px;">---</div>
<div class="t" style="left:370.29999999999995px;top:57px;color:#000;letter-spacing:-0.410px;">MAPILab POP3 Con…</div>
<div class="t" style="left:486px;top:57px;color:#000;letter-spacing:-0.590px;">\\SBS2008SRV</div>
<div class="a" style="left:4px;top:69px;width:13px;height:13px;background:#fff;border:1px solid;border-color:#848284 #fff #fff #848284"></div>
<div class="a" style="left:5px;top:70px;width:11px;height:11px;border:1px solid;border-color:#424142 #D6D3CE #D6D3CE #424142"></div>
<svg width="7" height="7" style="left:7px;top:72px" shape-rendering="crispEdges"><path d="M0 2v3l2 2 5-5v-3l-5 5z" fill="#000" transform="translate(0,0.5)"/></svg>
<div class="a" style="left:50px;top:75px;width:38px;height:1px;background:#10B4F8"></div>
<div class="t" style="left:96px;top:70px;color:#000;letter-spacing:-0.104px;">1.0</div>
<div class="t" style="left:141.5px;top:70px;color:#000;letter-spacing:-0.102px;">Connections Current</div>
<div class="t" style="left:257px;top:70px;color:#000;letter-spacing:0.010px;">---</div>
<div class="t" style="left:313px;top:70px;color:#000;letter-spacing:0.010px;">---</div>
<div class="t" style="left:370.29999999999995px;top:70px;color:#000;letter-spacing:-0.410px;">MAPILab POP3 Con…</div>
<div class="t" style="left:486px;top:70px;color:#000;letter-spacing:-0.590px;">\\SBS2008SRV</div>
<div class="a" style="left:4px;top:82px;width:13px;height:13px;background:#fff;border:1px solid;border-color:#848284 #fff #fff #848284"></div>
<div class="a" style="left:5px;top:83px;width:11px;height:11px;border:1px solid;border-color:#424142 #D6D3CE #D6D3CE #424142"></div>
<svg width="7" height="7" style="left:7px;top:85px" shape-rendering="crispEdges"><path d="M0 2v3l2 2 5-5v-3l-5 5z" fill="#000" transform="translate(0,0.5)"/></svg>
<div class="a" style="left:50px;top:88px;width:38px;height:1px;background:#FF00FF"></div>
<div class="t" style="left:96px;top:83px;color:#000;letter-spacing:-0.104px;">1.0</div>
<div class="t" style="left:141.5px;top:83px;color:#000;letter-spacing:-0.130px;">Bytes per sec</div>
<div class="t" style="left:257px;top:83px;color:#000;letter-spacing:0.010px;">---</div>
<div class="t" style="left:313px;top:83px;color:#000;letter-spacing:0.010px;">---</div>
<div class="t" style="left:370.29999999999995px;top:83px;color:#000;letter-spacing:-0.410px;">MAPILab POP3 Con…</div>
<div class="t" style="left:486px;top:83px;color:#000;letter-spacing:-0.590px;">\\SBS2008SRV</div>
<div class="a" style="left:4px;top:95px;width:13px;height:13px;background:#fff;border:1px solid;border-color:#848284 #fff #fff #848284"></div>
<div class="a" style="left:5px;top:96px;width:11px;height:11px;border:1px solid;border-color:#424142 #D6D3CE #D6D3CE #424142"></div>
<svg width="7" height="7" style="left:7px;top:98px" shape-rendering="crispEdges"><path d="M0 2v3l2 2 5-5v-3l-5 5z" fill="#000" transform="translate(0,0.5)"/></svg>
<div class="a" style="left:50px;top:101px;width:38px;height:1px;background:#8C0094"></div>
<div class="t" style="left:96px;top:96px;color:#000;letter-spacing:-0.104px;">1.0</div>
<div class="t" style="left:141.5px;top:96px;color:#000;letter-spacing:-0.234px;">Connections Failed</div>
<div class="t" style="left:257px;top:96px;color:#000;letter-spacing:0.010px;">---</div>
<div class="t" style="left:313px;top:96px;color:#000;letter-spacing:0.010px;">---</div>
<div class="t" style="left:370.29999999999995px;top:96px;color:#000;letter-spacing:-0.410px;">MAPILab POP3 Con…</div>
<div class="t" style="left:486px;top:96px;color:#000;letter-spacing:-0.590px;">\\SBS2008SRV</div>
<div class="a" style="left:4px;top:108px;width:13px;height:13px;background:#fff;border:1px solid;border-color:#848284 #fff #fff #848284"></div>
<div class="a" style="left:5px;top:109px;width:11px;height:11px;border:1px solid;border-color:#424142 #D6D3CE #D6D3CE #424142"></div>
<svg width="7" height="7" style="left:7px;top:111px" shape-rendering="crispEdges"><path d="M0 2v3l2 2 5-5v-3l-5 5z" fill="#000" transform="translate(0,0.5)"/></svg>
<div class="a" style="left:50px;top:114px;width:38px;height:1px;background:#FFC800"></div>
<div class="t" style="left:96px;top:109px;color:#000;letter-spacing:-0.104px;">1.0</div>
<div class="t" style="left:141.5px;top:109px;color:#000;letter-spacing:-0.093px;">Duplicates Total</div>
<div class="t" style="left:257px;top:109px;color:#000;letter-spacing:0.010px;">---</div>
<div class="t" style="left:313px;top:109px;color:#000;letter-spacing:0.010px;">---</div>
<div class="t" style="left:370.29999999999995px;top:109px;color:#000;letter-spacing:-0.410px;">MAPILab POP3 Con…</div>
<div class="t" style="left:486px;top:109px;color:#000;letter-spacing:-0.590px;">\\SBS2008SRV</div>
<div class="a" style="left:4px;top:121px;width:13px;height:13px;background:#fff;border:1px solid;border-color:#848284 #fff #fff #848284"></div>
<div class="a" style="left:5px;top:122px;width:11px;height:11px;border:1px solid;border-color:#424142 #D6D3CE #D6D3CE #424142"></div>
<svg width="7" height="7" style="left:7px;top:124px" shape-rendering="crispEdges"><path d="M0 2v3l2 2 5-5v-3l-5 5z" fill="#000" transform="translate(0,0.5)"/></svg>
<div class="a" style="left:50px;top:127px;width:38px;height:1px;background:#00FFFF"></div>
<div class="t" style="left:96px;top:122px;color:#000;letter-spacing:-0.104px;">1.0</div>
<div class="t" style="left:141.5px;top:122px;color:#000;letter-spacing:-0.164px;">Files in Inbox Folde…</div>
<div class="t" style="left:257px;top:122px;color:#000;letter-spacing:0.010px;">---</div>
<div class="t" style="left:313px;top:122px;color:#000;letter-spacing:0.010px;">---</div>
<div class="t" style="left:370.29999999999995px;top:122px;color:#000;letter-spacing:-0.410px;">MAPILab POP3 Con…</div>
<div class="t" style="left:486px;top:122px;color:#000;letter-spacing:-0.590px;">\\SBS2008SRV</div>
<div class="a" style="left:4px;top:134px;width:13px;height:13px;background:#fff;border:1px solid;border-color:#848284 #fff #fff #848284"></div><div class="a" style="left:5px;top:135px;width:11px;height:11px;border:1px solid;border-color:#424142 #D6D3CE #D6D3CE #424142"></div>
</div>
<div class="a dith" style="left:842px;top:651px;width:16px;height:135px"></div>
<div class="btn" style="left:842px;top:651px;width:16px;height:16px"></div>
<div class="btn" style="left:842px;top:667px;width:16px;height:92px"></div>
<div class="btn" style="left:842px;top:770px;width:16px;height:16px"></div>
<svg width="7" height="4" style="left:846px;top:657px" shape-rendering="crispEdges"><path d="M0 4h7L3.500 0z" fill="#000"/></svg>
<svg width="7" height="4" style="left:846px;top:776px" shape-rendering="crispEdges"><path d="M0 0h7L3.500 4z" fill="#000"/></svg>
<div class="a" style="left:4px;top:802px;width:649px;height:18px;border:1px solid;border-color:#848284 #fff #fff #848284"></div>
<div class="a" style="left:655px;top:802px;width:130px;height:18px;border:1px solid;border-color:#848284 #fff #fff #848284"></div>
<div class="a" style="left:787px;top:802px;width:83px;height:18px;border:1px solid;border-color:#848284 #fff #fff #848284"></div>
<svg width="420" height="42" viewBox="0 0 420 42" style="left:149px;top:553px"><path d="M6.500 9.500 H393.500 L399.500 2 V9.500 H410 Q415.500 9.500 415.500 15 V34 Q415.500 39.500 410 39.500 H6.500 Q1.500 39.500 1.500 34 V15 Q1.500 9.500 6.500 9.500Z" fill="#FFFFE1" stroke="#000" stroke-width="1"/></svg>
<div class="t" style="left:162px;top:572px;letter-spacing:-0.187px;">Counter: \\SBS2008SRV\MAPILab POP3 Connector: Service\Threads Count Total.</div>
</body></html>
